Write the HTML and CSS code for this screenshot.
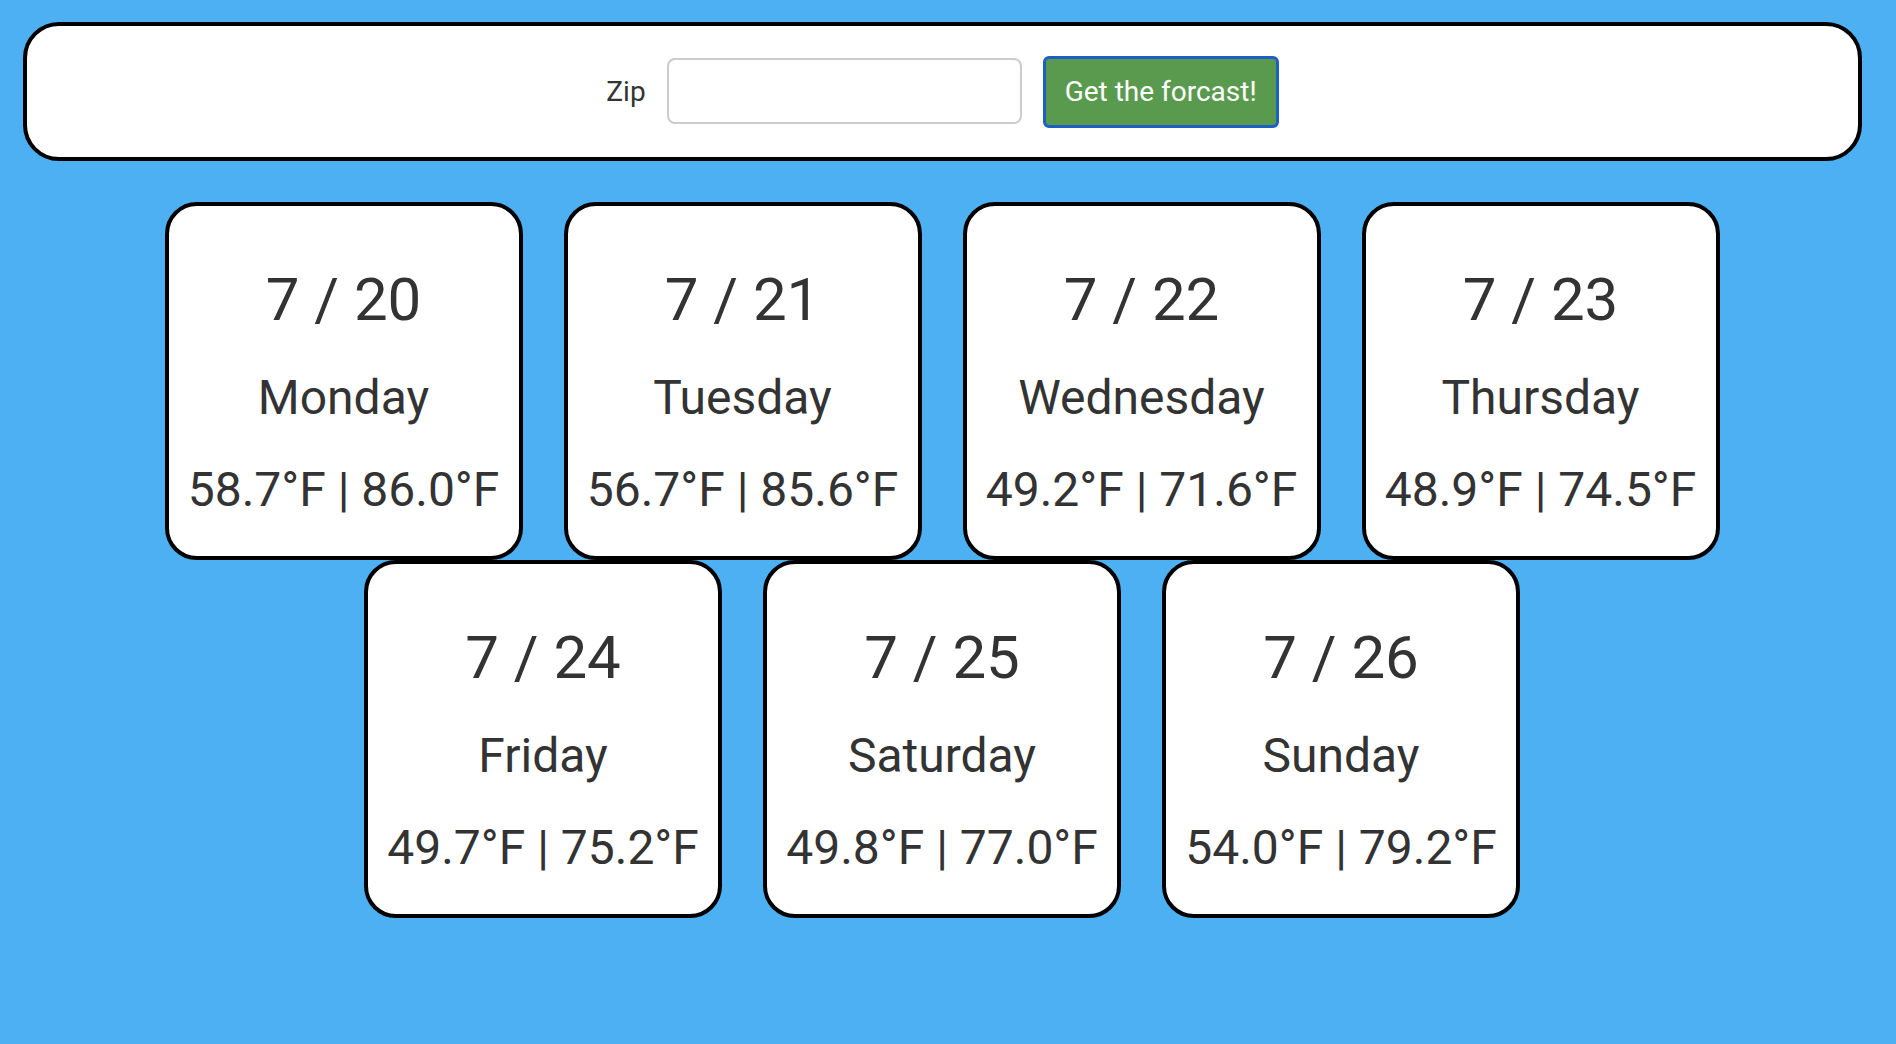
FILE: index.html
```html
<!DOCTYPE html>
<html lang="en">
<head>
<meta charset="utf-8">
<title>Forecast</title>
<link rel="stylesheet" href="styles.css">
</head>
<body>
<div class="page">
  <header class="search-bar">
    <form class="search-form">
      <label class="zip-label" for="zip">Zip</label>
      <input class="zip-input" id="zip" type="text">
      <button class="forecast-btn" type="button">Get the forcast!</button>
    </form>
  </header>
  <main class="cards">
    <div class="card"><div class="card-date">7 / 20</div><div class="card-day">Monday</div><div class="card-temp">58.7°F | 86.0°F</div></div>
    <div class="card"><div class="card-date">7 / 21</div><div class="card-day">Tuesday</div><div class="card-temp">56.7°F | 85.6°F</div></div>
    <div class="card"><div class="card-date">7 / 22</div><div class="card-day">Wednesday</div><div class="card-temp">49.2°F | 71.6°F</div></div>
    <div class="card"><div class="card-date">7 / 23</div><div class="card-day">Thursday</div><div class="card-temp">48.9°F | 74.5°F</div></div>
    <div class="card"><div class="card-date">7 / 24</div><div class="card-day">Friday</div><div class="card-temp">49.7°F | 75.2°F</div></div>
    <div class="card"><div class="card-date">7 / 25</div><div class="card-day">Saturday</div><div class="card-temp">49.8°F | 77.0°F</div></div>
    <div class="card"><div class="card-date">7 / 26</div><div class="card-day">Sunday</div><div class="card-temp">54.0°F | 79.2°F</div></div>
  </main>
</div>
</body>
</html>
```

FILE: styles.css
```css
html, body {
  margin: 0;
  padding: 0;
  background: #4cb0f2;
  font-family: Roboto, "Liberation Sans", Arial, sans-serif;
  color: #333333;
}

.page {
  width: 1884px;
  padding-top: 22px;
}

.search-bar {
  box-sizing: border-box;
  height: 139px;
  margin: 0 22px 0 23px;
  background: #ffffff;
  border: 4px solid #000000;
  border-radius: 36px;
  display: flex;
  align-items: center;
  justify-content: center;
}

.search-form {
  display: flex;
  align-items: center;
  gap: 21px;
  margin: 0;
}

.zip-label {
  font-size: 28px;
  line-height: 32px;
  color: #333333;
}

.zip-input {
  box-sizing: border-box;
  width: 355px;
  height: 66px;
  margin: -2px 0 0 0;
  border: 2px solid #cccccc;
  border-radius: 8px;
  background: #ffffff;
  padding: 0 20px;
  font-size: 28px;
  font-family: inherit;
}

.forecast-btn {
  box-sizing: border-box;
  height: 72px;
  margin: 0;
  padding: 0 19px;
  background: #5a9a4f;
  border: 3px solid #1e5fc6;
  border-radius: 6px;
  color: #ffffff;
  font-family: inherit;
  font-size: 28px;
  line-height: 32px;
}

.cards {
  display: flex;
  flex-wrap: wrap;
  justify-content: center;
  column-gap: 41px;
  row-gap: 0;
  margin-top: 41px;
}

.card {
  box-sizing: border-box;
  width: 358px;
  height: 358px;
  background: #ffffff;
  border: 4px solid #000000;
  border-radius: 32px;
  padding-top: 61px;
  text-align: center;
  display: flex;
  flex-direction: column;
  align-items: center;
}

.card-date {
  font-size: 60px;
  line-height: 66px;
}

.card-day {
  font-size: 48px;
  line-height: 53px;
  margin-top: 38px;
}

.card-temp {
  font-size: 48px;
  line-height: 53px;
  margin-top: 39px;
  white-space: nowrap;
}
```
